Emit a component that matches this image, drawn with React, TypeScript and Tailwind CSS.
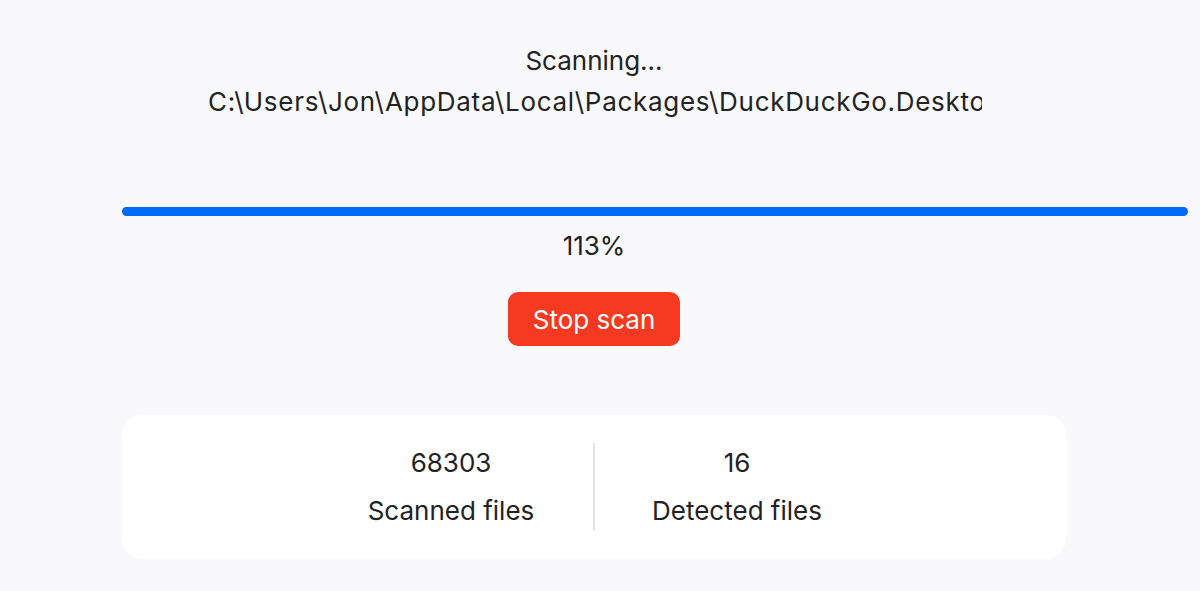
import React from "react";

export default function App() {
  return (
    <div
      className="w-[1200px] h-[591px] bg-[#f9f9fc] text-[#222222] overflow-hidden"
      style={{ fontFamily: "Inter, 'Noto Sans', sans-serif" }}
    >
      <div className="w-[1188px]">
        <div className="flex flex-col items-center pt-[40px]">
          <div className="text-[26px] leading-[41px]">Scanning...</div>
          <div className="w-[774px] overflow-hidden whitespace-nowrap text-[26px] leading-[41px] tracking-[0.7px] ml-[2px]">
            C:\Users\Jon\AppData\Local\Packages\DuckDuckGo.DesktopBrowser_ya2fgkz3nks94\LocalState
          </div>
        </div>
        <div className="pl-[122px] mt-[85px]">
          <div className="w-[1066px] h-[9px] rounded-full bg-[#0069f5]" />
        </div>
        <div className="flex justify-center mt-[12px]">
          <div className="text-[26px] leading-[36px]">113%</div>
        </div>
        <div className="flex justify-center mt-[28px]">
          <button className="w-[172px] h-[54px] rounded-[10px] bg-[#f53a21] text-white text-[26px]">
            Stop scan
          </button>
        </div>
        <div className="ml-[122px] mt-[69px] w-[944px] h-[144px] bg-white rounded-[20px] flex justify-center items-center">
          <div className="w-[284px] flex flex-col items-center gap-[12px]">
            <div className="text-[26px] leading-[36px]">68303</div>
            <div className="text-[26px] leading-[36px]">Scanned files</div>
          </div>
          <div className="w-[2px] h-[88px] bg-[#e3e3ea]" />
          <div className="w-[284px] flex flex-col items-center gap-[12px]">
            <div className="text-[26px] leading-[36px]">16</div>
            <div className="text-[26px] leading-[36px]">Detected files</div>
          </div>
        </div>
      </div>
    </div>
  );
}
